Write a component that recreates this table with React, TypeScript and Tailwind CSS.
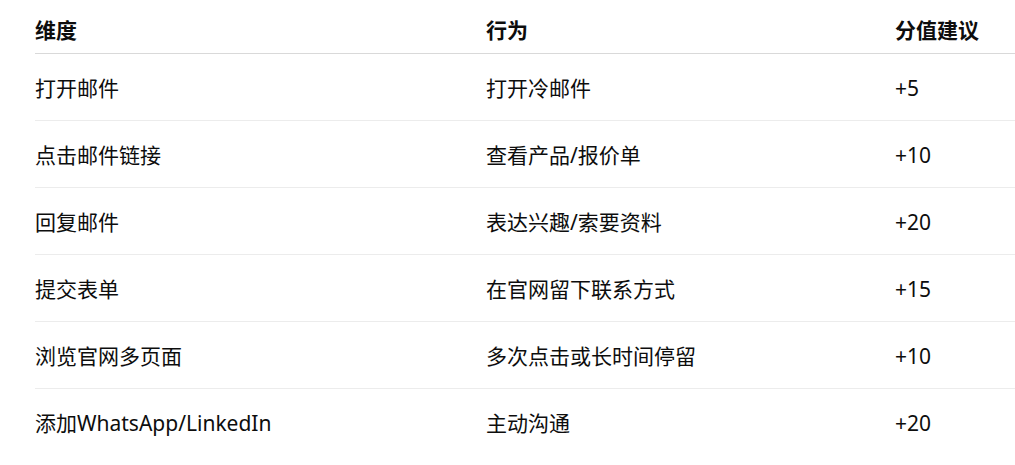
const ROWS: { dim: string; action: string; score: string }[] = [
  { dim: '打开邮件', action: '打开冷邮件', score: '+5' },
  { dim: '点击邮件链接', action: '查看产品/报价单', score: '+10' },
  { dim: '回复邮件', action: '表达兴趣/索要资料', score: '+20' },
  { dim: '提交表单', action: '在官网留下联系方式', score: '+15' },
  { dim: '浏览官网多页面', action: '多次点击或长时间停留', score: '+10' },
  { dim: '添加WhatsApp/LinkedIn', action: '主动沟通', score: '+20' },
];

export default function App() {
  return (
    <div
      className="w-[1015px] h-[465px] overflow-hidden bg-white pl-[35px] text-[#0d0d0d]"
      style={{ fontFamily: '"Noto Sans", "Noto Sans CJK SC", sans-serif' }}
    >
      <div className="w-[1000px]">
        <div className="grid grid-cols-[451px_409px_1fr] h-[54px] items-center pt-[8px] border-b border-[#d9d9d9] text-[21px] font-bold">
          <div>维度</div>
          <div>行为</div>
          <div>分值建议</div>
        </div>
        {ROWS.map((r, i) => (
          <div
            key={r.dim}
            className={
              'grid grid-cols-[451px_409px_1fr] h-[67px] items-center pt-[3px] text-[21px] ' +
              (i < ROWS.length - 1 ? 'border-b border-[#ececec]' : '')
            }
          >
            <div>{r.dim}</div>
            <div>{r.action}</div>
            <div>{r.score}</div>
          </div>
        ))}
      </div>
    </div>
  );
}
